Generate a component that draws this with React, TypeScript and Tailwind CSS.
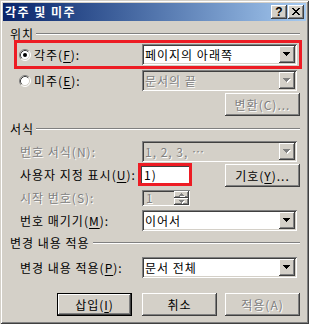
import React from "react";

const RAISED =
  "shadow-[inset_-1px_-1px_#404040,inset_1px_1px_#ffffff,inset_-2px_-2px_#808080,inset_2px_2px_#d4d0c8]";
const DEFAULT_BTN =
  "shadow-[inset_0_0_0_1px_#000000,inset_-2px_-2px_#404040,inset_2px_2px_#ffffff,inset_-3px_-3px_#808080,inset_3px_3px_#d4d0c8]";
const SUNKEN =
  "shadow-[inset_1px_1px_#808080,inset_-1px_-1px_#ffffff,inset_2px_2px_#404040,inset_-2px_-2px_#d4d0c8]";
const DIS = "text-[#808080] [text-shadow:1px_1px_0_#ffffff]";

function U({ c }: { c: string }) {
  return <span className="underline underline-offset-[2px] decoration-1">{c}</span>;
}

function Radio({ checked }: { checked?: boolean }) {
  return (
    <svg width="12" height="12" viewBox="0 0 12 12" className="shrink-0">
      <circle cx="6" cy="6" r="5" fill="#ffffff" />
      <path d="M2.11 9.89 A5.5 5.5 0 0 1 9.89 2.11" stroke="#808080" strokeWidth="1" fill="none" />
      <path d="M9.89 2.11 A5.5 5.5 0 0 1 2.11 9.89" stroke="#ffffff" strokeWidth="1" fill="none" />
      <path d="M2.82 9.18 A4.5 4.5 0 0 1 9.18 2.82" stroke="#404040" strokeWidth="1" fill="none" />
      <path d="M9.18 2.82 A4.5 4.5 0 0 1 2.82 9.18" stroke="#d4d0c8" strokeWidth="1" fill="none" />
      {checked && <circle cx="6" cy="6" r="2" fill="#000000" />}
    </svg>
  );
}

const TRI = "M0 0h7v1h-1v1h-1v1h-1v1h-1v-1h-1v-1h-1v-1h-1z";

function Tri({ disabled }: { disabled?: boolean }) {
  return (
    <svg width="8" height="5" viewBox="0 0 8 5" shapeRendering="crispEdges">
      {disabled && <path d={TRI} fill="#ffffff" transform="translate(1 1)" />}
      <path d={TRI} fill={disabled ? "#808080" : "#000000"} />
    </svg>
  );
}

function Combo({ value, disabled }: { value: string; disabled?: boolean }) {
  return (
    <div
      className={`w-[155px] h-[21px] shrink-0 flex items-center ${SUNKEN} ${
        disabled ? "bg-[#d4d0c8]" : "bg-white"
      }`}
    >
      <span className={`flex-1 pl-[3px] leading-[12px] whitespace-nowrap ${disabled ? DIS : "text-black"}`}>{value}</span>
      <div className={`w-[16px] h-[17px] mr-[2px] flex items-center justify-center bg-[#d4d0c8] ${RAISED}`}>
        <Tri disabled={disabled} />
      </div>
    </div>
  );
}

function Btn({
  children,
  disabled,
  def,
}: {
  children: React.ReactNode;
  disabled?: boolean;
  def?: boolean;
}) {
  return (
    <div
      className={`w-[75px] h-[23px] shrink-0 flex items-center justify-center bg-[#d4d0c8] leading-[12px] whitespace-nowrap ${
        def ? DEFAULT_BTN : RAISED
      } ${disabled ? DIS : "text-black"}`}
    >
      {children}
    </div>
  );
}

function Header({ label, gap }: { label: string; gap: string }) {
  return (
    <div className="h-[12px] flex items-center shrink-0">
      <span className="leading-[12px] text-black whitespace-nowrap">{label}</span>
      <div className={`flex-1 h-[2px] border-t border-b border-t-[#808080] border-b-white ${gap}`} />
    </div>
  );
}

function SmallArrow({ up }: { up?: boolean }) {
  const d = up ? "M2 0h1v1h1v1h1v1h-5v-1h1v-1h1z" : "M0 0h5v1h-1v1h-1v1h-1v-1h-1v-1h-1z";
  return (
    <svg width="6" height="4" viewBox="0 0 6 4" shapeRendering="crispEdges">
      <path d={d} fill="#ffffff" transform="translate(1 1)" />
      <path d={d} fill="#808080" />
    </svg>
  );
}

export default function App() {
  return (
    <div
      className={`w-[309px] h-[324px] bg-[#d4d0c8] p-[3px] flex flex-col text-[12px] font-['Noto_Sans_CJK_KR','Noto_Sans',sans-serif] shadow-[inset_1px_1px_#d4d0c8,inset_-1px_-1px_#404040,inset_2px_2px_#ffffff,inset_-2px_-2px_#808080]`}
    >
      {/* Title bar */}
      <div className="h-[18px] shrink-0 flex items-center bg-linear-to-r from-[#0a246a] to-[#a6caf0] pl-[2px] pr-[2px]">
        <span className="flex-1 text-white font-bold leading-[12px] tracking-[1.5px] whitespace-nowrap">각주 및 미주</span>
        <div className={`w-[16px] h-[14px] flex items-center justify-center bg-[#d4d0c8] ${RAISED}`}>
          <span className="font-['Liberation_Sans',sans-serif] font-bold text-[12px] leading-[12px] text-black -mt-[1px]">?</span>
        </div>
        <div className={`w-[16px] h-[14px] ml-[1px] flex items-center justify-center bg-[#d4d0c8] ${RAISED}`}>
          <svg width="8" height="7" viewBox="0 0 8 7" shapeRendering="crispEdges" className="-mt-[1px]">
            <path
              d="M0 0h2v1h1v1h2v-1h1v-1h2v1h-1v1h-1v1h-1v1h1v1h1v1h1v1h-2v-1h-1v-1h-2v1h-1v1h-2v-1h1v-1h1v-1h1v-1h-1v-1h-1v-1h-1z"
              fill="#000000"
            />
          </svg>
        </div>
      </div>

      {/* Content */}
      <div className="flex flex-col pl-[7px] pr-[6px] text-black tracking-[1px]">
        <div className="mt-[7px]">
          <Header label="위치" gap="ml-[2px]" />
        </div>

        {/* Footnote row in red box */}
        <div className="ml-[4px] w-[288px] h-[29px] shrink-0 border-[3px] border-[#ed1c24] flex items-center">
          <div className="pl-[2px] flex items-center flex-1">
            <Radio checked />
            <span className="ml-[3px] leading-[12px] whitespace-nowrap">
              각주(<U c="F" />):
            </span>
          </div>
          <div className="mr-[2px]">
            <Combo value="페이지의 아래쪽" />
          </div>
        </div>

        {/* Endnote row */}
        <div className="mt-[1px] h-[21px] flex items-center shrink-0">
          <div className="w-[132px] pl-[9px] flex items-center">
            <Radio />
            <span className="ml-[3px] leading-[12px] whitespace-nowrap">
              미주(<U c="E" />):
            </span>
          </div>
          <Combo value="문서의 끝" disabled />
        </div>

        <div className="mt-[2px] self-end">
          <Btn disabled>변환(C)...</Btn>
        </div>

        <div className="mt-[7px]">
          <Header label="서식" gap="ml-[2px]" />
        </div>

        <div className="mt-[6px] h-[21px] flex items-center shrink-0">
          <div className={`w-[132px] pl-[10px] leading-[12px] whitespace-nowrap ${DIS}`}>번호 서식(N):</div>
          <Combo value="1, 2, 3, …" disabled />
        </div>

        <div className="mt-[1px] h-[23px] flex items-center shrink-0">
          <div className="w-[128px] pl-[10px] leading-[12px] whitespace-nowrap">
            사용자 지정 표시(<U c="U" />):
          </div>
          <div className="w-[54px] h-[23px] border-[3px] border-[#ed1c24] shrink-0">
            <div className="w-full h-full bg-white shadow-[inset_1px_1px_#404040] flex items-center pl-[3px] leading-[12px]">
              1)
            </div>
          </div>
          <div className="ml-auto mt-[2px]">
            <Btn>
              <span>
                기호(<U c="Y" />)...
              </span>
            </Btn>
          </div>
        </div>

        <div className="mt-[4px] h-[16px] flex items-center shrink-0">
          <div className={`w-[132px] pl-[10px] leading-[12px] whitespace-nowrap ${DIS}`}>시작 번호(S):</div>
          <div className={`w-[48px] h-[16px] flex items-center bg-[#d4d0c8] ${SUNKEN}`}>
            <span className={`flex-1 pl-[4px] leading-[12px] ${DIS}`}>1</span>
            <div className="w-[15px] h-full flex flex-col py-[1px] mr-[1px]">
              <div className={`flex-1 flex items-center justify-center bg-[#d4d0c8] ${RAISED}`}>
                <SmallArrow up />
              </div>
              <div className={`flex-1 flex items-center justify-center bg-[#d4d0c8] ${RAISED}`}>
                <SmallArrow />
              </div>
            </div>
          </div>
        </div>

        <div className="mt-[4px] h-[21px] flex items-center shrink-0">
          <div className="w-[132px] pl-[10px] leading-[12px] whitespace-nowrap">
            번호 매기기(<U c="M" />):
          </div>
          <Combo value="이어서" />
        </div>

        <div className="mt-[6px]">
          <Header label="변경 내용 적용" gap="ml-[3px]" />
        </div>

        <div className="mt-[8px] h-[21px] flex items-center shrink-0">
          <div className="w-[132px] pl-[10px] leading-[12px] whitespace-nowrap">
            변경 내용 적용(<U c="P" />):
          </div>
          <Combo value="문서 전체" />
        </div>

        <div className="mt-[15px] flex items-center shrink-0">
          <div className="ml-[47px]">
            <Btn def>
              <span>
                삽입(<U c="I" />)
              </span>
            </Btn>
          </div>
          <div className="ml-[10px]">
            <Btn>취소</Btn>
          </div>
          <div className="ml-[8px]">
            <Btn disabled>적용(A)</Btn>
          </div>
        </div>
      </div>
    </div>
  );
}
